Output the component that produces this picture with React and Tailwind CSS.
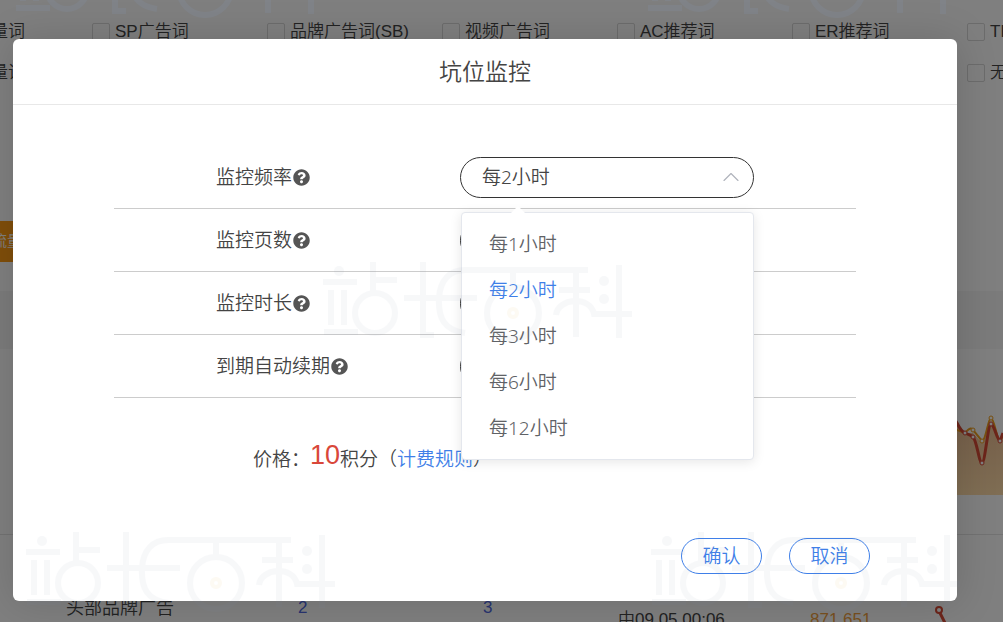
import { useState } from "react";
import { ChevronUp } from "lucide-react";
import { FaQuestionCircle } from "react-icons/fa";

const filters = [
  "自然流量词",
  "SP广告词",
  "品牌广告词(SB)",
  "视频广告词",
  "AC推荐词",
  "ER推荐词",
  "TR推荐词",
];

const frequencies = ["每1小时", "每2小时", "每3小时", "每6小时", "每12小时"];

const Filter = ({ label, className = "" }) => (
  <label className={`flex items-center gap-[5px] whitespace-nowrap ${className}`}>
    <input
      type="checkbox"
      className="size-[18px] shrink-0 appearance-none rounded-xs border border-[#d8d8d8]"
    />
    {label}
  </label>
);

const Watermark = ({ className }) => (
  <svg
    width="314"
    height="80"
    viewBox="0 0 314 80"
    fill="none"
    stroke="#8494ac"
    strokeWidth="6"
    aria-hidden="true"
    className={`pointer-events-none absolute ${className}`}
  >
    <g fill="#8494ac" stroke="none">
      <circle cx="17" cy="9" r="5" />
      <circle cx="282" cy="19" r="5" />
      <circle cx="282" cy="37" r="5" />
    </g>
    <path d="M1 20H35M9 28V63M22 28V63M2 70H36" />
    <path d="M51 0V30M51 18H75" />
    <circle cx="53" cy="51" r="20" />
    <path d="M101 0V73H112M82 36H155" />
    <path d="M266 8H143C128 8 118 18 117 36C116 56 122 68 143 71" />
    <path d="M191 10V26" />
    <circle cx="191" cy="51" r="26" />
    <circle cx="191" cy="51" r="4" stroke="#e8b040" strokeWidth="4" />
    <path d="M254 10V75M237 28H268M234 53C236 36 268 33 272 52H310M297 3V76" />
  </svg>
);

const TrendChart = () => (
  <svg width="60" height="100" viewBox="0 0 60 100" fill="none">
    <defs>
      <linearGradient id="trend" x1="0" y1="0" x2="0" y2="1">
        <stop offset="0" stopColor="#e8b890" />
        <stop offset="1" stopColor="#ffdca8" />
      </linearGradient>
    </defs>
    <path
      d="M0 10L14 27L22 36L30 36L39 46L48 23L57 44L60 36V98H0Z"
      fill="url(#trend)"
    />
    <path
      d="M0 20L14 33L22 36C27 30 29 31 30 33L39 44C43 44 45 21 48 21S54 43 57 44L60 38"
      stroke="#f0a020"
      strokeWidth="2"
    />
    <path
      d="M0 4L14 26C17 32 19 35 22 36C26 38 28 38 30 40C34 44 36 66 39 66S45 27 48 27S54 43 57 44L60 36"
      stroke="#d84a35"
      strokeWidth="3"
    />
    <g fill="#fff" stroke="#d84a35">
      <circle cx="22" cy="36" r="2" />
      <circle cx="30" cy="40" r="2" />
      <circle cx="39" cy="66" r="2" />
      <circle cx="48" cy="27" r="2" />
      <circle cx="57" cy="44" r="2" />
    </g>
    <g fill="#fff" stroke="#f0a020">
      <circle cx="30" cy="33" r="2" />
      <circle cx="39" cy="44" r="2" />
      <circle cx="48" cy="21" r="2" />
    </g>
  </svg>
);

const KeywordPage = () => (
  <div className="text-[17px] text-[#444]">
    {/* Filters */}
    <div className="-ml-[83px] grid auto-rows-[41px] grid-cols-[repeat(7,175px)] pt-[11px]">
      {filters.map((f) => (
        <Filter key={f} label={f} />
      ))}
      <Filter label="付费流量词" />
      <Filter label="无效词" className="col-start-7" />
    </div>

    <button className="-ml-[24px] mt-[128px] block h-[41px] w-[37px] overflow-hidden bg-[#ff9c14] pl-4 text-left text-[15px] whitespace-nowrap text-white">
      流量
    </button>
    <div className="mt-[29px] h-[58px] bg-[#f6f6f6]" />

    {/* Keyword rows */}
    <div className="flex h-[186px] items-start justify-end border-b border-[#e4e4e4] pt-12">
      <TrendChart />
    </div>
    <div className="flex items-start pt-[60px] pl-[66px] leading-[26px] whitespace-nowrap">
      <span className="w-[232px] shrink-0 text-[18px]">头部品牌广告</span>
      <a href="#" className="w-[185px] shrink-0 text-[#5068e0]">
        2
      </a>
      <a href="#" className="w-[135px] shrink-0 text-[#5068e0]">
        3
      </a>
      <span className="w-[192px] shrink-0 pt-3">中09.05 00:06</span>
      <span className="w-[124px] shrink-0 pt-3 text-[#f0a040]">871,651</span>
      <svg width="24" height="32" viewBox="0 0 24 32" fill="none" stroke="#d84a35" strokeWidth="2" className="mt-2 shrink-0">
        <circle cx="5" cy="7" r="3" fill="#fff" />
        <path d="M6 10L14 26" strokeWidth="3" />
      </svg>
    </div>
  </div>
);

const Row = ({ id, label, children }) => (
  <div className="flex h-[63px] items-center border-b border-[#ccc] pl-[102px]">
    <div className="flex w-[244px] shrink-0 items-center gap-px">
      <label htmlFor={id}>{label}</label>
      <FaQuestionCircle className="text-[17px] text-[#555]" />
    </div>
    {children}
  </div>
);

const pill = "h-[41px] rounded-full border border-[#333] bg-white";

const App = () => {
  const [frequency, setFrequency] = useState("每2小时");
  const [open, setOpen] = useState(true);

  return (
    <div className="relative h-screen overflow-hidden bg-white font-['Liberation_Sans','Noto_Sans_CJK_SC',sans-serif] font-[350]">
      <KeywordPage />

      <div className="absolute inset-0 bg-black/50 pt-[39px] pr-[46px] pl-[13px]">
        <div
          role="dialog"
          aria-labelledby="title"
          className="rounded-md bg-white font-['Noto_Sans','Noto_Sans_CJK_SC',sans-serif] text-[19px] text-[#444] shadow-[1px_1px_40px_rgba(0,0,0,0.15)]"
        >
          <h2
            id="title"
            className="flex h-[66px] items-center justify-center border-b border-[#e8e8e8] text-[23px] font-[350]"
          >
            坑位监控
          </h2>

          <div className="px-[101px] pt-[41px]">
            <Row id="frequency" label="监控频率">
              <div className="relative z-10 w-[294px]">
                <select
                  id="frequency"
                  value={frequency}
                  onChange={(e) => setFrequency(e.target.value)}
                  onClick={() => setOpen(!open)}
                  className={`block w-full appearance-none px-[21px] ${pill}`}
                >
                  {frequencies.map((f) => (
                    <option key={f}>{f}</option>
                  ))}
                </select>
                <ChevronUp
                  size={28}
                  strokeWidth={1}
                  className="pointer-events-none absolute top-[6px] right-[9px] text-[#b0b4bc]"
                />

                {open && (
                  <div className="absolute top-[55px] right-0 left-px rounded border border-[#e4e7ed] bg-white pt-[9px] pb-[7px] shadow-[0_2px_12px_rgba(0,0,0,0.1)]">
                    <svg
                      width="14"
                      height="8"
                      viewBox="0 0 14 8"
                      className="absolute -top-[7px] left-[49px]"
                    >
                      <path d="M0 7L7 0L14 7V8H0Z" fill="#fff" />
                    </svg>
                    <ul role="listbox">
                      {frequencies.map((f) => (
                        <li
                          key={f}
                          role="option"
                          aria-selected={f === frequency}
                          onClick={() => {
                            setFrequency(f);
                            setOpen(false);
                          }}
                          className={`flex h-[46px] cursor-pointer items-center px-[27px] ${
                            f === frequency ? "text-[#3f7fe8]" : "text-[#606266]"
                          }`}
                        >
                          {f}
                        </li>
                      ))}
                    </ul>
                  </div>
                )}
              </div>
            </Row>
            <Row id="pages" label="监控页数">
              <input id="pages" className={`w-[240px] px-5 ${pill}`} />
            </Row>
            <Row id="duration" label="监控时长">
              <input id="duration" className={`w-[240px] px-5 ${pill}`} />
            </Row>
            <Row id="renew" label="到期自动续期">
              <input id="renew" className={`w-[240px] px-5 ${pill}`} />
            </Row>
          </div>

          {/* Price */}
          <p className="mt-[41px] flex h-10 items-center pl-[240px] leading-10">
            价格：
            <span className="pb-2 font-['Liberation_Sans'] text-[27px] leading-8 text-[#d9473a]">
              10
            </span>
            积分（
            <a href="#" className="text-[#3f7fe8]">
              计费规则
            </a>
            ）
          </p>

          {/* Actions */}
          <div className="mt-[59px] flex justify-end gap-[27px] pr-[87px] pb-[27px]">
            <button className="h-9 w-[81px] rounded-full border border-[#3f7fe8] text-[#3f7fe8]">
              确认
            </button>
            <button className="h-9 w-[81px] rounded-full border border-[#3f7fe8] text-[#3f7fe8]">
              取消
            </button>
          </div>
        </div>
      </div>

      <Watermark className="-top-[62px] left-[14px] opacity-20" />
      <Watermark className="-top-[62px] left-[646px] opacity-20" />
      <Watermark className="top-[262px] left-[322px] z-20 opacity-6" />
      <Watermark className="top-[532px] left-[25px] opacity-6" />
      <Watermark className="top-[532px] left-[650px] opacity-6" />
    </div>
  );
};

export default App;
